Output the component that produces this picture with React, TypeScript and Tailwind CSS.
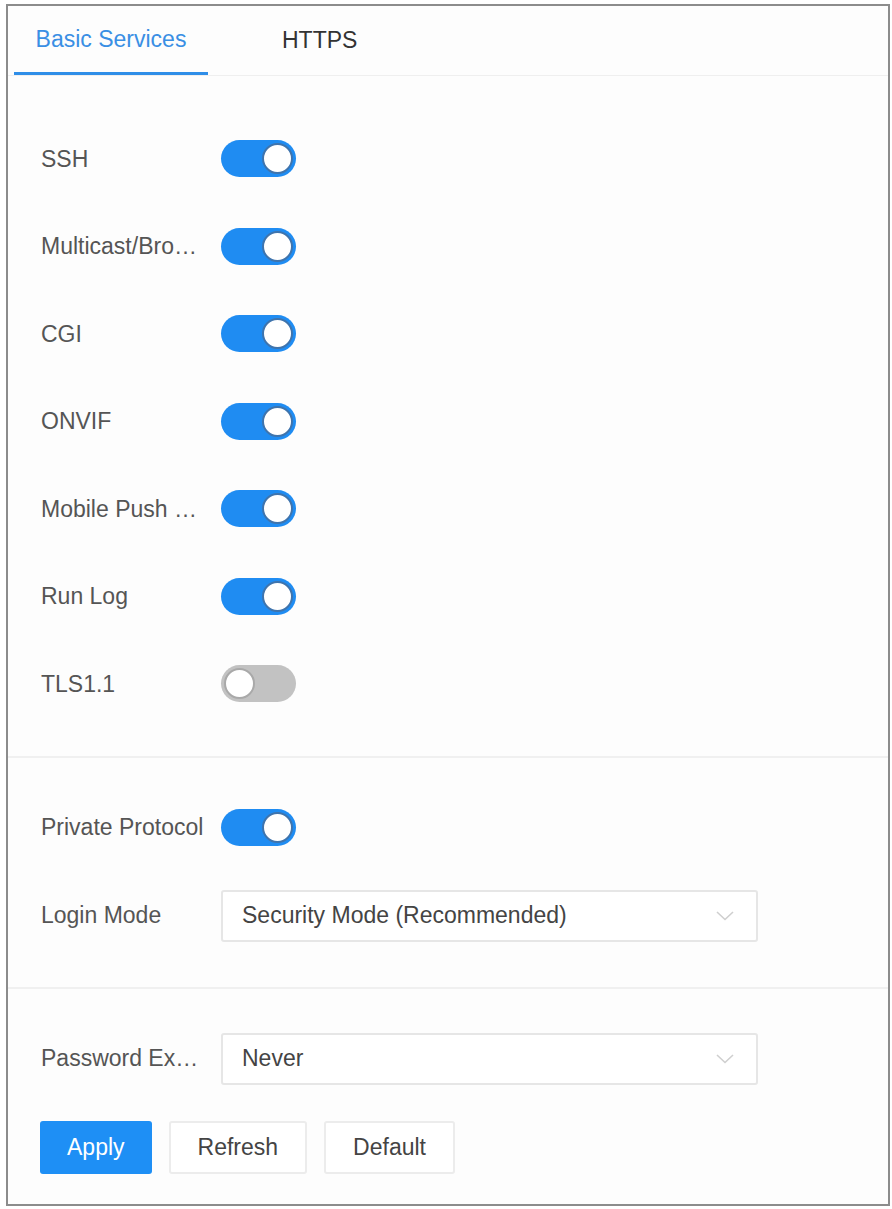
import React from "react";

function Toggle({ on }: { on: boolean }) {
  return on ? (
    <div className="relative w-[75px] h-[37px] rounded-full bg-[#1f8cf2] shrink-0">
      <div className="absolute right-[3px] top-[3px] w-[31px] h-[31px] rounded-full bg-white border-2 border-[#3f74ad]" />
    </div>
  ) : (
    <div className="relative w-[75px] h-[37px] rounded-full bg-[#c2c2c2] shrink-0">
      <div className="absolute left-[3px] top-[3px] w-[31px] h-[31px] rounded-full bg-white border-2 border-[#a9a9a9]" />
    </div>
  );
}

function Row({ label, children }: { label: string; children: React.ReactNode }) {
  return (
    <div className="flex items-center h-[87.5px]">
      <div className="w-[180px] shrink-0 pr-[6px] whitespace-nowrap overflow-hidden text-[23px] text-[#555555]">
        {label}
      </div>
      {children}
    </div>
  );
}

function Select({ value }: { value: string }) {
  return (
    <div className="flex items-center justify-between w-[537px] h-[52px] border-2 border-[#e6e6e6] rounded-[3px] bg-white pl-[19px] pr-[18px]">
      <span className="text-[23px] text-[#444444] whitespace-nowrap">{value}</span>
      <svg width="18" height="10" viewBox="0 0 18 10" className="mr-[4px]">
        <path d="M1 1 L9 8.5 L17 1" fill="none" stroke="#cfcfcf" strokeWidth="1.6" />
      </svg>
    </div>
  );
}

export default function App() {
  return (
    <div className="bg-white w-[892px] h-[1209px] pt-[4px] pl-[6px] font-['Liberation_Sans',Arial,sans-serif]">
      <div className="w-[884px] h-[1202px] border-2 border-[#8c8c8c] bg-[#fdfdfd] flex flex-col">
        {/* Tabs */}
        <div className="flex h-[70px] pl-[6px] border-b border-[#efefef] shrink-0">
          <div className="flex items-center justify-center w-[194px] h-full border-b-[3px] border-[#2f8ee8] text-[23px] text-[#3a8fe4]">
            Basic Services
          </div>
          <div className="flex items-center h-full pl-[74px] text-[23px] text-[#333333]">HTTPS</div>
        </div>

        {/* Section 1 */}
        <div className="pl-[33px] pt-[39px] pb-[28px] border-b-2 border-[#f0f0f0]">
          <Row label="SSH"><Toggle on /></Row>
          <Row label="Multicast/Bro…"><Toggle on /></Row>
          <Row label="CGI"><Toggle on /></Row>
          <Row label="ONVIF"><Toggle on /></Row>
          <Row label="Mobile Push …"><Toggle on /></Row>
          <Row label="Run Log"><Toggle on /></Row>
          <Row label="TLS1.1"><Toggle on={false} /></Row>
        </div>

        {/* Section 2 */}
        <div className="pl-[33px] pt-[26px] pb-[27px] border-b-2 border-[#f0f0f0]">
          <div className="flex items-center h-[88px]">
            <div className="w-[180px] shrink-0 whitespace-nowrap text-[23px] text-[#555555]">Private Protocol</div>
            <Toggle on />
          </div>
          <div className="flex items-center h-[88px]">
            <div className="w-[180px] shrink-0 whitespace-nowrap text-[23px] text-[#555555]">Login Mode</div>
            <Select value="Security Mode (Recommended)" />
          </div>
        </div>

        {/* Section 3 */}
        <div className="pl-[32px] pt-[26px]">
          <div className="flex items-center h-[88px] pl-[1px]">
            <div className="w-[180px] shrink-0 whitespace-nowrap text-[23px] text-[#555555]">Password Ex…</div>
            <Select value="Never" />
          </div>
          <div className="flex gap-[17px] mt-[18px]">
            <button className="h-[53px] px-[27px] rounded-[3px] bg-[#1e8ff5] text-white text-[23px]">Apply</button>
            <button className="h-[53px] px-[27px] rounded-[3px] bg-white border-2 border-[#ececec] text-[#444444] text-[23px]">Refresh</button>
            <button className="h-[53px] px-[27px] rounded-[3px] bg-white border-2 border-[#ececec] text-[#444444] text-[23px]">Default</button>
          </div>
        </div>
      </div>
    </div>
  );
}
